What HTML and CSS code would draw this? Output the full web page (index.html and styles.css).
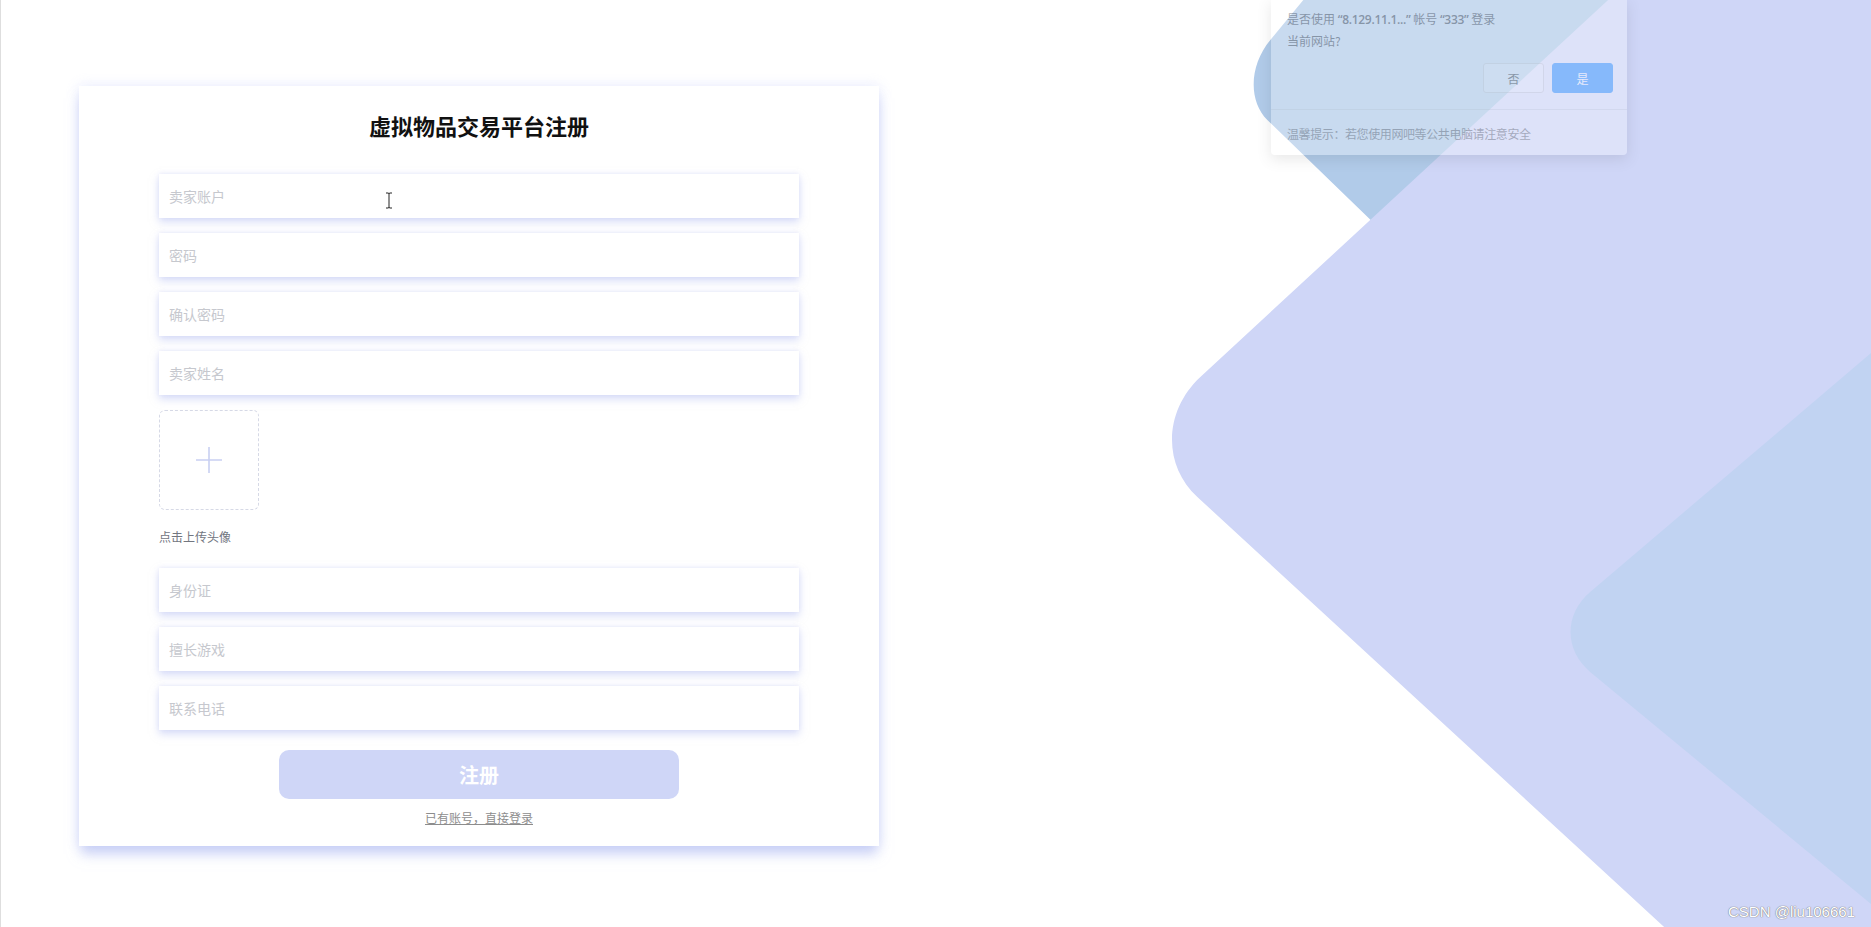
FILE: index.html
```html
<!DOCTYPE html>
<html lang="zh-CN">
<head>
    <meta charset="UTF-8">
    <meta name="viewport" content="width=device-width, initial-scale=1.0">
    <title>虚拟物品交易平台注册</title>
    <link rel="stylesheet" href="styles.css">
</head>
<body>
    <!-- 背景图形 -->
    <svg class="bg" viewBox="0 0 1871 927" preserveAspectRatio="none">
        <path class="shape-dark" d="M1270 40 L1303 0 L1700 0 L1700 400 L1450 297 L1267 120 C1247.7 101 1249 65 1270 40 Z"/>
        <path class="shape-main" d="M1200 377 L1608 0 L1871 0 L1871 927 L1664 927 L1197 497 C1162 465 1163.4 411 1200 377 Z"/>
        <path class="shape-small" d="M1590 592 L1871 353 L1871 904 L1590 672 C1563.8 650 1563.8 614.3 1590 592 Z"/>
    </svg>

    <div class="page">
        <div class="register-card">
            <h2>虚拟物品交易平台注册</h2>

            <form class="register-form" onsubmit="return false">
                <input type="text" placeholder="卖家账户" />
                <input type="password" placeholder="密码" />
                <input type="password" placeholder="确认密码" />
                <input type="text" placeholder="卖家姓名" />

                <!-- 头像上传 -->
                <div class="avatar-upload">
                    <div class="upload-box">
                        <svg width="28" height="28" viewBox="0 0 28 28">
                            <path d="M14 1 V27 M1 14 H27" stroke="#c9d0f2" stroke-width="1.6" fill="none"/>
                        </svg>
                    </div>
                    <span class="upload-tip">点击上传头像</span>
                </div>

                <input type="text" placeholder="身份证" />
                <input type="text" placeholder="擅长游戏" />
                <input type="text" placeholder="联系电话" />

                <button class="submit-btn">注册</button>
                <a class="login-link" href="#">已有账号，直接登录</a>
            </form>

            <!-- 鼠标光标 -->
            <svg class="cursor" width="8" height="17" viewBox="0 0 8 17">
                <path d="M1 1 H3 Q4 1 4 2 Q4 1 5 1 H7 M4 2 V15 M1 16 H3 Q4 16 4 15 Q4 16 5 16 H7" stroke="#222" stroke-width="1" fill="none"/>
            </svg>
        </div>
    </div>

    <!-- 浏览器保存账号提示 -->
    <div class="pwd-dialog">
        <div class="dialog-body">
            <p>是否使用 <b>“8.129.11.1...”</b> 帐号 <b>“333”</b> 登录</p>
            <p>当前网站?</p>
            <div class="dialog-actions">
                <button class="btn-no">否</button>
                <button class="btn-yes">是</button>
            </div>
        </div>
        <div class="dialog-footer">温馨提示：若您使用网吧等公共电脑请注意安全</div>
    </div>

    <div class="watermark">CSDN @liu106661</div>
</body>
</html>
```

FILE: styles.css
```css
/* 基础 */
html, body { margin: 0; height: 100%; }
body { font-family: "Noto Sans CJK SC", "Noto Sans", sans-serif; background: #ffffff; overflow: hidden; position: relative; border-left: 1px solid #dedede; box-sizing: border-box; }

/* 背景 */
.bg { position: absolute; top: 0; left: 0; width: 100%; height: 100%; z-index: 0; }
.shape-dark { fill: #b1cbe9; }
.shape-main { fill: #cfd6f7; }
.shape-small { fill: #c1d3f2; }

/* 注册卡片 */
.page { position: relative; z-index: 1; padding: 86px 0 0 78px; }
.register-card { position: relative; width: 800px; box-sizing: border-box; padding: 24px 80px 20px; background: #ffffff; box-shadow: 0 10px 12px -2px rgba(170, 181, 240, 0.6), 0 0 12px rgba(205, 211, 250, 0.45); }
.register-card h2 { margin: 0 0 34px; text-align: center; font-size: 22px; line-height: 30px; font-weight: bold; color: #111; }

/* 表单 */
.register-form { display: flex; flex-direction: column; }
.register-form input { height: 44px; margin-bottom: 15px; padding: 0 10px; border: none; outline: none; background: #fff; font-family: inherit; font-size: 14px; color: #333; box-shadow: 0 4px 8px rgba(176, 186, 242, 0.5), 0 -1px 4px rgba(214, 219, 246, 0.35); }
.register-form input::placeholder { color: #c6c8ce; }

/* 头像 */
.avatar-upload { display: flex; flex-direction: column; align-items: flex-start; margin-bottom: 23px; }
.upload-box { width: 100px; height: 100px; box-sizing: border-box; border: 1px dashed #d6d9e6; border-radius: 6px; display: flex; align-items: center; justify-content: center; }
.upload-tip { margin-top: 18px; font-size: 12px; line-height: 17px; color: #72767f; }

/* 按钮 */
.submit-btn { align-self: center; width: 400px; height: 49px; margin-top: 5px; border: none; border-radius: 10px; background: #cfd6f7; color: #fff; font-family: inherit; font-size: 20px; font-weight: bold; cursor: pointer; }
.login-link { align-self: center; margin-top: 10px; font-size: 12px; line-height: 17px; color: #8d8d8d; text-decoration: underline; }

.cursor { position: absolute; left: 306px; top: 106px; }

/* 提示框 */
.pwd-dialog { position: absolute; z-index: 2; top: 0; left: 1270px; width: 356px; opacity: 0.5; background: rgba(255, 255, 255, 0.6); border-radius: 0 0 4px 4px; box-shadow: 0 4px 14px rgba(0, 0, 0, 0.18); color: #5d6068; font-size: 12px; }
.dialog-body { padding: 8px 14px 16px 16px; border-bottom: 1px solid rgba(200, 205, 215, 0.6); }
.dialog-body p { margin: 0; line-height: 21px; }
.dialog-body b { font-family: "Open Sans", sans-serif; font-weight: 600; letter-spacing: -0.3px; }
.dialog-actions { display: flex; justify-content: flex-end; gap: 8px; margin-top: 12px; }
.dialog-actions button { width: 61px; height: 30px; border-radius: 3px; font-family: inherit; font-size: 12px; }
.btn-no { background: rgba(255, 255, 255, 0.3); border: 1px solid #d4d7df; color: #606266; }
.btn-yes { background: #409eff; border: 1px solid #409eff; color: #fff; }
.dialog-footer { padding: 15px 16px 13px; line-height: 17px; color: #7a7d85; letter-spacing: -0.4px; }

/* 水印 */
.watermark { position: absolute; z-index: 2; right: 16px; bottom: 7px; font-family: "Liberation Sans", Arial, sans-serif; font-size: 15px; color: #fff; text-shadow: 0 0 1px #777, 0 0 1px #777; }
```
